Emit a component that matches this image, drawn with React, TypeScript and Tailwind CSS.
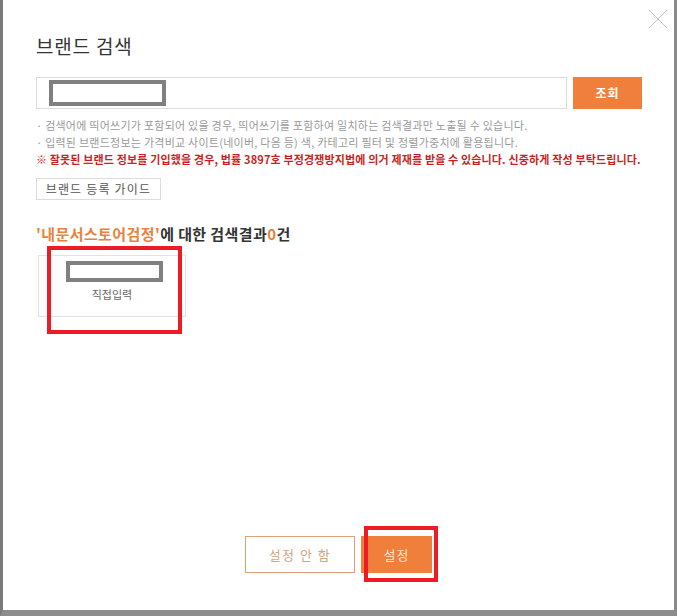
import React from 'react';

const font = { fontFamily: '"Noto Sans CJK KR", "Noto Sans", sans-serif' };

const App: React.FC = () => {
  return (
    <div
      className="relative w-[677px] h-[616px] bg-white border-l-[3px] border-r-[3px] border-b-[6px] border-l-[#7a7a7a] border-r-[#8a8a8a] border-b-[#8c8c8c] overflow-hidden"
      style={font}
    >
      {/* close */}
      <svg className="absolute left-[645px] top-[9px]" width="20" height="20" viewBox="0 0 20 20">
        <path d="M1 1 L19 19 M19 1 L1 19" stroke="#c4c4c4" strokeWidth="1" />
      </svg>

      <div className="pl-[33px] pr-[31px] pt-[33px]">
        <h1 className="text-[19px] leading-[26px] text-[#333] font-normal tracking-[0.8px]">브랜드 검색</h1>

        <div className="mt-[18px] flex gap-[6px]">
          <div className="w-[531px] h-[32px] border border-[#dcdcdc] relative">
            <div className="absolute left-[12px] top-[2px] w-[117px] h-[26px] border-[4px] border-[#808080] bg-white" />
          </div>
          <button className="w-[69px] h-[32px] bg-[#f07f3c] text-white text-[12px] font-bold tracking-[1px]">조회</button>
        </div>

        <div className="mt-[8px] text-[11px] leading-[17px] tracking-[0.25px]">
          <p className="text-[#9a9a9a]">· 검색어에 띄어쓰기가 포함되어 있을 경우, 띄어쓰기를 포함하여 일치하는 검색결과만 노출될 수 있습니다.</p>
          <p className="text-[#9a9a9a]">· 입력된 브랜드정보는 가격비교 사이트(네이버, 다음 등) 색, 카테고리 필터 및 정렬가중치에 활용됩니다.</p>
          <p className="text-[#cc1f1f] font-semibold tracking-[0.15px]">※ 잘못된 브랜드 정보를 기입했을 경우, 법률 3897호 부정경쟁방지법에 의거 제재를 받을 수 있습니다. 신중하게 작성 부탁드립니다.</p>
        </div>

        <button className="mt-[10px] w-[125px] h-[22px] border border-[#dcdcdc] text-[12px] text-[#555] tracking-[1.2px]">
          브랜드 등록 가이드
        </button>

        <p className="mt-[24px] text-[15px] leading-[20px] font-bold text-[#333] tracking-[0.4px]">
          <span className="text-[#e8823e]">'내문서스토어검정'</span>에 대한 검색결과<span className="text-[#e8823e]">0</span>건
        </p>

        <div className="mt-[11px] ml-[2px] w-[148px] h-[62px] border border-[#e3e3e3] flex flex-col items-center pt-[5px]">
          <div className="ml-[4px] w-[97px] h-[21px] border-[4px] border-[#808080] bg-white" />
          <span className="mt-[5px] text-[11px] leading-[14px] text-[#666]">직접입력</span>
        </div>
      </div>

      <div className="absolute left-0 right-0 top-[536px] flex justify-center gap-[6px]">
        <button className="w-[110px] h-[37px] border border-[#d9a27a] text-[#d6a47e] text-[13px] tracking-[1.5px]">설정 안 함</button>
        <button className="w-[71px] h-[37px] bg-[#f07f3c] text-[#fde6d4] text-[13px] tracking-[1px]">설정</button>
      </div>

      {/* red annotation boxes */}
      <div className="absolute left-[44px] top-[246px] w-[135px] h-[88px] border-[4px] border-[#ed1c24]" />
      <div className="absolute left-[361px] top-[526px] w-[74px] h-[56px] border-[4px] border-[#ed1c24]" />
    </div>
  );
};

export default App;
